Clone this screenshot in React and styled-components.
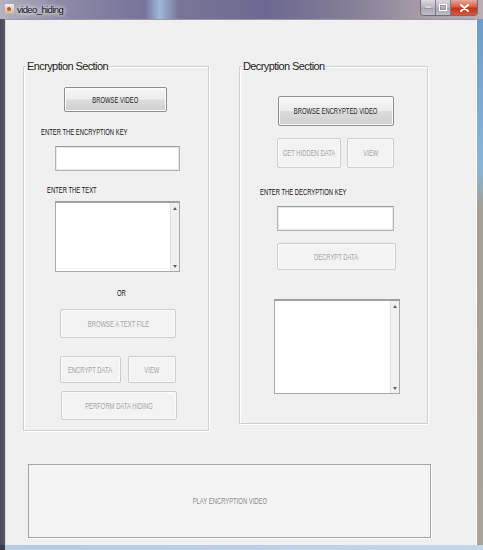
import React from 'react';
import styled, { createGlobalStyle } from 'styled-components';

const GlobalStyle = createGlobalStyle`
  html, body {
    margin: 0;
    padding: 0;
    background: #8c8a96;
  }
  * {
    box-sizing: border-box;
  }
`;

const Screen = styled.div`
  width: 483px;
  height: 550px;
  display: flex;
  flex-direction: column;
  overflow: hidden;
  background: linear-gradient(90deg, #4a4858 0px, #5a5868 5px, #8e8c9c 5px, #a8a4ac 100%);
  font-family: "Liberation Sans", Arial, sans-serif;
`;

const TitleBar = styled.div`
  height: 19px;
  flex: none;
  display: flex;
  align-items: flex-start;
  background: linear-gradient(90deg, #b4b2c0 0%, #8e8aa6 12%, #77739a 30%, #9fb9d8 33%, #7a7698 37%, #6c6890 55%, #8a8298 75%, #a89ea8 88%, #b8b0b4 100%);
`;

const TitleIcon = styled.div`
  width: 9px;
  height: 10px;
  margin: 4px 0 0 5px;
  border-radius: 1px;
  background: linear-gradient(180deg, #f4efe4, #c9b89a);
  position: relative;
  &::after {
    content: '';
    position: absolute;
    left: 2px;
    top: 3px;
    width: 4px;
    height: 4px;
    border-radius: 50%;
    background: #b65a2a;
  }
`;

const TitleText = styled.span`
  margin: 4px 0 0 3px;
  font-family: "Liberation Sans", Arial, sans-serif;
  font-size: 9.5px;
  letter-spacing: -0.6px;
  color: #111;
  text-shadow: 0 0 4px #fff, 0 0 6px #fff;
`;

const Controls = styled.div`
  margin-left: auto;
  margin-right: 5px;
  display: flex;
  height: 16px;
  border: 1px solid #6e6c7c;
  border-top: none;
  border-radius: 0 0 4px 4px;
  overflow: hidden;
`;

const CtrlButton = styled.div`
  width: ${({ $w }) => $w}px;
  height: 100%;
  display: flex;
  align-items: center;
  justify-content: center;
  background: ${({ $close }) =>
    $close
      ? 'linear-gradient(180deg, #e8a89a 0%, #d8604a 45%, #c4321c 55%, #d4583e 100%)'
      : 'linear-gradient(180deg, #dcd8e0 0%, #bcb8c4 45%, #aaa6b4 55%, #c0bcc8 100%)'};
  border-right: ${({ $close }) => ($close ? 'none' : '1px solid #7e7c8c')};
`;

const Middle = styled.div`
  flex: 1;
  display: flex;
`;

const Client = styled.div`
  margin-left: 5px;
  width: 472px;
  height: 526px;
  background: #f0f0f0;
  border-top: 1px solid #9a98a6;
  border-left: 1px solid #d8d8d8;
  border-right: 1px solid #ffffff;
  display: flex;
  flex-direction: column;
`;

const RightEdge = styled.div`
  flex: 1;
  background: linear-gradient(180deg, #6d9cc8 0%, #88b4d8 28%, #a4a096 36%, #a8a49a 100%);
`;

const BottomEdge = styled.div`
  height: 5px;
  flex: none;
  background: linear-gradient(90deg, #3c3a48 0px, #3c3a48 5px, #b8cce0 5px, #c4d6e8 100%);
`;

const PanelsRow = styled.div`
  display: flex;
  align-items: flex-start;
  padding: 39px 0 0 17px;
  gap: 30px;
`;

const GroupBox = styled.fieldset`
  margin: 0;
  padding: 0 0 ${({ $pb }) => $pb}px 0;
  min-width: 0;
  width: ${({ $w }) => $w}px;
  border: 1px solid #d0d0d0;
  box-shadow: inset 1px 1px 0 #ffffff, 1px 1px 0 #ffffff;
  display: flex;
  flex-direction: column;
  align-items: flex-start;
`;

const Legend = styled.legend`
  margin-left: 2px;
  padding: 0 1px;
  font-family: "Liberation Sans", Arial, sans-serif;
  font-size: 11px;
  letter-spacing: -0.6px;
  color: #222;
  line-height: 14px;
`;

/* the dialog font is a narrow 8px face; squeeze Liberation Sans to match */
const Small = styled.span`
  display: inline-block;
  font-family: "Liberation Sans", Arial, sans-serif;
  font-size: 8.5px;
  line-height: 10px;
  white-space: nowrap;
  transform: scaleX(0.69);
  transform-origin: ${({ $origin = 'center' }) => $origin};
`;

const Button = styled.div`
  width: ${({ $w }) => $w}px;
  height: ${({ $h }) => $h}px;
  margin: ${({ $mt = 0 }) => $mt}px 0 0 ${({ $ml = 0 }) => $ml}px;
  display: flex;
  align-items: center;
  justify-content: center;
  overflow: hidden;
  border-radius: 2px;
  color: ${({ $disabled }) => ($disabled ? '#a4a4a4' : '#222')};
  border: 1px solid ${({ $disabled }) => ($disabled ? '#cdcdcd' : '#8e8e8e')};
  background: ${({ $disabled }) =>
    $disabled
      ? '#f3f3f3'
      : 'linear-gradient(180deg, #f6f6f6 0%, #ececec 48%, #dcdcdc 52%, #cfcfcf 100%)'};
  box-shadow: ${({ $disabled }) =>
    $disabled ? 'inset 0 0 0 1px #fafafa' : 'inset 0 0 0 1px #fbfbfb'};
`;

const ButtonRow = styled.div`
  display: flex;
  gap: ${({ $gap }) => $gap}px;
  margin: ${({ $mt }) => $mt}px 0 0 ${({ $ml }) => $ml}px;
`;

const Label = styled.div`
  display: flex;
  align-items: center;
  height: 10px;
  margin: ${({ $mt }) => $mt}px 0 0 ${({ $ml }) => $ml}px;
  color: #111;
`;

const TextInput = styled.div`
  width: ${({ $w }) => $w}px;
  height: 25px;
  margin: ${({ $mt }) => $mt}px 0 0 ${({ $ml }) => $ml}px;
  background: #fff;
  border: 1px solid #b4b4b4;
  border-top-color: #9c9c9c;
  box-shadow: inset 0 0 0 1px #e8e8e8;
`;

const TextArea = styled.div`
  width: ${({ $w }) => $w}px;
  height: ${({ $h }) => $h}px;
  margin: ${({ $mt }) => $mt}px 0 0 ${({ $ml }) => $ml}px;
  background: #fff;
  border: 1px solid #a8a8a8;
  border-top: 2px solid #a0a0a0;
  display: flex;
  justify-content: flex-end;
`;

const ScrollBar = styled.div`
  width: 9px;
  height: 100%;
  background: #f0f0f0;
  border-left: 1px solid #e2e2e2;
  display: flex;
  flex-direction: column;
  justify-content: space-between;
  align-items: center;
  padding: 4px 0 3px;
`;

const Arrow = styled.div`
  width: 0;
  height: 0;
  border-left: 2px solid transparent;
  border-right: 2px solid transparent;
  ${({ $down }) => ($down ? 'border-top: 3px solid #606060;' : 'border-bottom: 3px solid #606060;')}
`;

const PlayButton = styled.div`
  width: 403px;
  height: 74px;
  margin: 33px 0 0 22px;
  display: flex;
  align-items: center;
  justify-content: center;
  background: #f4f4f4;
  border: 1px solid #a4a4a4;
  box-shadow: 1px 1px 0 #ffffff;
  color: #8a8a8a;
`;

const Scroll = () => (
  <ScrollBar>
    <Arrow />
    <Arrow $down />
  </ScrollBar>
);

export default function App() {
  return (
    <>
      <GlobalStyle />
      <Screen>
        <TitleBar>
          <TitleIcon />
          <TitleText>video_hiding</TitleText>
          <Controls>
            <CtrlButton $w={15}>
              <svg width="7" height="3" viewBox="0 0 7 3">
                <rect x="0" y="0" width="7" height="2" fill="#fff" stroke="#666" strokeWidth="0.5" />
              </svg>
            </CtrlButton>
            <CtrlButton $w={15}>
              <svg width="8" height="7" viewBox="0 0 8 7">
                <rect x="0.5" y="0.5" width="7" height="6" fill="none" stroke="#fff" strokeWidth="1" />
                <rect x="1.5" y="1.5" width="5" height="4" fill="none" stroke="#777" strokeWidth="0.5" />
              </svg>
            </CtrlButton>
            <CtrlButton $w={26} $close>
              <svg width="9" height="8" viewBox="0 0 9 8">
                <path d="M1 1 L8 7 M8 1 L1 7" stroke="#fff" strokeWidth="2" strokeLinecap="round" />
              </svg>
            </CtrlButton>
          </Controls>
        </TitleBar>
        <Middle>
          <Client>
            <PanelsRow>
              <GroupBox $w={186} $pb={10}>
                <Legend>Encryption Section</Legend>
                <Button $w={103} $h={25} $ml={40} $mt={14}><Small>BROWSE VIDEO</Small></Button>
                <Label $ml={17} $mt={15}><Small $origin="left">ENTER THE ENCRYPTION KEY</Small></Label>
                <TextInput $w={125} $ml={31} $mt={9} />
                <Label $ml={23} $mt={14}><Small $origin="left">ENTER THE TEXT</Small></Label>
                <TextArea $w={125} $h={71} $ml={31} $mt={6}>
                  <Scroll />
                </TextArea>
                <Label $ml={93} $mt={16}><Small $origin="left">OR</Small></Label>
                <Button $w={116} $h={29} $ml={36} $mt={11} $disabled><Small>BROWSE A TEXT FILE</Small></Button>
                <ButtonRow $gap={7} $ml={36} $mt={18}>
                  <Button $w={61} $h={27} $disabled><Small>ENCRYPT DATA</Small></Button>
                  <Button $w={48} $h={27} $disabled><Small>VIEW</Small></Button>
                </ButtonRow>
                <Button $w={116} $h={29} $ml={37} $mt={8} $disabled><Small>PERFORM DATA HIDING</Small></Button>
              </GroupBox>
              <GroupBox $w={189} $pb={29}>
                <Legend>Decryption Section</Legend>
                <Button $w={116} $h={30} $ml={38} $mt={23}><Small>BROWSE ENCRYPTED VIDEO</Small></Button>
                <ButtonRow $gap={6} $ml={37} $mt={12}>
                  <Button $w={64} $h={30} $disabled><Small>GET HIDDEN DATA</Small></Button>
                  <Button $w={47} $h={30} $disabled><Small>VIEW</Small></Button>
                </ButtonRow>
                <Label $ml={20} $mt={19}><Small $origin="left">ENTER THE DECRYPTION KEY</Small></Label>
                <TextInput $w={117} $ml={37} $mt={9} />
                <Button $w={119} $h={27} $ml={37} $mt={12} $disabled><Small>DECRYPT DATA</Small></Button>
                <TextArea $w={126} $h={95} $ml={34} $mt={29}>
                  <Scroll />
                </TextArea>
              </GroupBox>
            </PanelsRow>
            <PlayButton><Small>PLAY ENCRYPTION VIDEO</Small></PlayButton>
          </Client>
          <RightEdge />
        </Middle>
        <BottomEdge />
      </Screen>
    </>
  );
}
